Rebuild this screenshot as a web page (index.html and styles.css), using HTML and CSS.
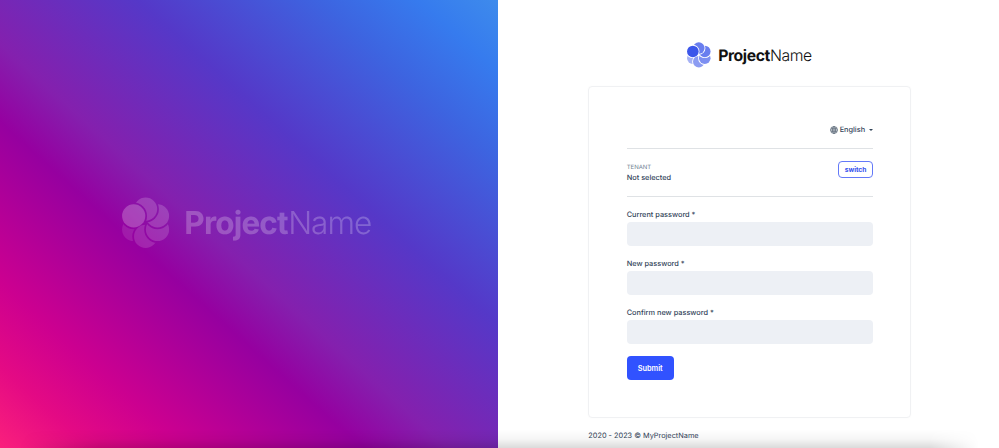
FILE: index.html
```
<!DOCTYPE html>
<html lang="en">
<head>
<meta charset="utf-8">
<title>Change password</title>
<link rel="stylesheet" href="styles.css">
</head>
<body>
<svg class="defs" width="0" height="0" aria-hidden="true">
  <defs>
    <mask id="m-top" maskUnits="userSpaceOnUse" x="0" y="0" width="60" height="60"><rect width="60" height="60" fill="#fff"/><circle cx="11.7" cy="18.9" r="13.3"/></mask>
    <mask id="m-tr" maskUnits="userSpaceOnUse" x="0" y="0" width="60" height="60"><rect width="60" height="60" fill="#fff"/><circle cx="23.6" cy="12.1" r="13.3"/></mask>
    <mask id="m-br" maskUnits="userSpaceOnUse" x="0" y="0" width="60" height="60"><rect width="60" height="60" fill="#fff"/><circle cx="35.5" cy="18.9" r="13.3"/></mask>
    <mask id="m-bot" maskUnits="userSpaceOnUse" x="0" y="0" width="60" height="60"><rect width="60" height="60" fill="#fff"/><circle cx="35.5" cy="32.5" r="13.3"/></mask>
    <mask id="m-bl" maskUnits="userSpaceOnUse" x="0" y="0" width="60" height="60"><rect width="60" height="60" fill="#fff"/><circle cx="23.6" cy="39.4" r="13.3"/><circle cx="11.7" cy="18.9" r="13.3"/></mask>
    <symbol id="logo" viewBox="0 0 250 52">
      <circle cx="11.7" cy="18.9" r="11.6"/>
      <circle cx="23.6" cy="12.1" r="11.6" mask="url(#m-top)" opacity=".76"/>
      <circle cx="35.5" cy="18.9" r="11.6" mask="url(#m-tr)" opacity=".76"/>
      <circle cx="35.5" cy="32.5" r="11.6" mask="url(#m-br)" opacity=".66"/>
      <circle cx="23.6" cy="39.4" r="11.6" mask="url(#m-bot)" opacity=".58"/>
      <circle cx="11.7" cy="32.5" r="11.6" mask="url(#m-bl)" opacity=".45"/>
      <text class="logo-bold" x="62.3" y="37" textLength="104.3">Project</text>
      <text class="logo-light" x="166.2" y="37" textLength="84">Name</text>
    </symbol>
  </defs>
</svg>
<div class="page">
  <section class="hero">
    <svg class="hero-logo"><use href="#logo"/></svg>
  </section>
  <main class="side">
    <svg class="brand"><use href="#logo"/></svg>
    <div class="card">
      <div class="language">
        <svg class="globe" viewBox="0 0 16 16"><circle cx="8" cy="8" r="7"/><ellipse cx="8" cy="8" rx="3.2" ry="7"/><path d="M8 1v14M1 8h14M2 4.7h12M2 11.3h12"/></svg>
        <span>English</span><i class="caret"></i>
      </div>
      <div class="tenant">
        <div><div class="tenant-label">TENANT</div><div class="tenant-name">Not selected</div></div>
        <button class="switch">switch</button>
      </div>
      <form>
        <div class="field"><label for="a">Current password *</label><input id="a" type="password"></div>
        <div class="field"><label for="b">New password *</label><input id="b" type="password"></div>
        <div class="field"><label for="c">Confirm new password *</label><input id="c" type="password"></div>
        <button class="submit" type="button">Submit</button>
      </form>
    </div>
    <footer>2020 - 2023 © MyProjectName</footer>
  </main>
  <div class="shade"></div>
</div>
</body>
</html>
```
FILE: styles.css
```
* { box-sizing: border-box; }
body { margin: 0; background: #fff; color: #324459; font: 500 7.35px/10px Inter, sans-serif; text-rendering: geometricPrecision; overflow: hidden; }
button, input { font: inherit; }
.defs { position: absolute; }
.page { position: relative; display: flex; width: 999px; height: 448px; overflow: hidden; }
.hero {
  width: 498px;
  display: flex;
  justify-content: center;
  align-items: center;
  background: linear-gradient(to top right, #fa207c 0%, #e40a84 9%, #cc0090 18.5%, #9600a0 36.4%, #8420ae 45%, #5538c8 63.8%, #3d64e0 82%, #367bee 92%, #3e8bec 100%);
}
.hero-logo { width: 250px; height: 52px; fill: #fff; color: #fff; opacity: .23; margin-right: 4px; margin-bottom: 2px; }
.logo-bold { font: 700 31.5px Inter, sans-serif; fill: currentColor; }
.logo-light { font: 300 31.5px Inter, sans-serif; fill: currentColor; }
.side { width: 501px; padding: 42px 87px 0 90.3px; display: flex; flex-direction: column; }
.brand { width: 125px; height: 26px; margin-left: 98.6px; margin-bottom: 18px; fill: #3b56ea; flex: none; color: #111; }
.card { width: 323px; height: 332px; padding: 37px 37.2px 0 37.4px; border: 1px solid #f0f1f3; border-radius: 4px; box-shadow: 0 0 3px rgba(0,0,0,.02); flex: none; }
.language { display: flex; justify-content: flex-end; align-items: center; height: 25px; padding-bottom: 12px; border-bottom: 1px solid #dfe2e5; }
.globe { width: 8px; height: 8px; margin-right: 2px; fill: none; stroke: #5c6a78; stroke-width: 1.5; }
.caret { margin-left: 4px; border: 2.6px solid transparent; border-top-color: #324459; border-bottom: 0; }
.tenant { display: flex; justify-content: space-between; height: 48px; padding-top: 12px; border-bottom: 1px solid #dfe2e5; }
.tenant-label { margin-top: 1px; font-size: 6px; font-weight: 400; line-height: 11px; color: #6f7f91; }
.tenant-name { line-height: 10px; }
.switch { width: 35px; height: 17px; padding: 0; border: 1px solid #6379f8; border-radius: 4px; background: #fff; color: #3550ee; font-size: 6.7px; font-weight: 700; }
form { padding-top: 13px; }
.field { height: 49px; }
.field label { display: block; height: 12px; line-height: 10px; }
.field input { display: block; width: 100%; height: 24px; padding: 0; border: 0; border-radius: 4px; background: #edf0f5; }
.submit { display: block; width: 47px; height: 24px; margin-top: -1px; padding: 1px 0 0; border: 0; border-radius: 4px; background: #3152ff; color: #fff; font-weight: 600; }
footer { margin-top: 13px; font-weight: 400; }
.shade { position: absolute; left: 0; right: 0; bottom: 0; height: 18px; background: linear-gradient(to top, rgba(0,0,0,.14), rgba(0,0,0,.04) 50%, transparent); -webkit-mask-image: linear-gradient(to right, transparent 2%, #000 10%, #000 93%, transparent 98%); mask-image: linear-gradient(to right, transparent 2%, #000 10%, #000 93%, transparent 98%); }
```
